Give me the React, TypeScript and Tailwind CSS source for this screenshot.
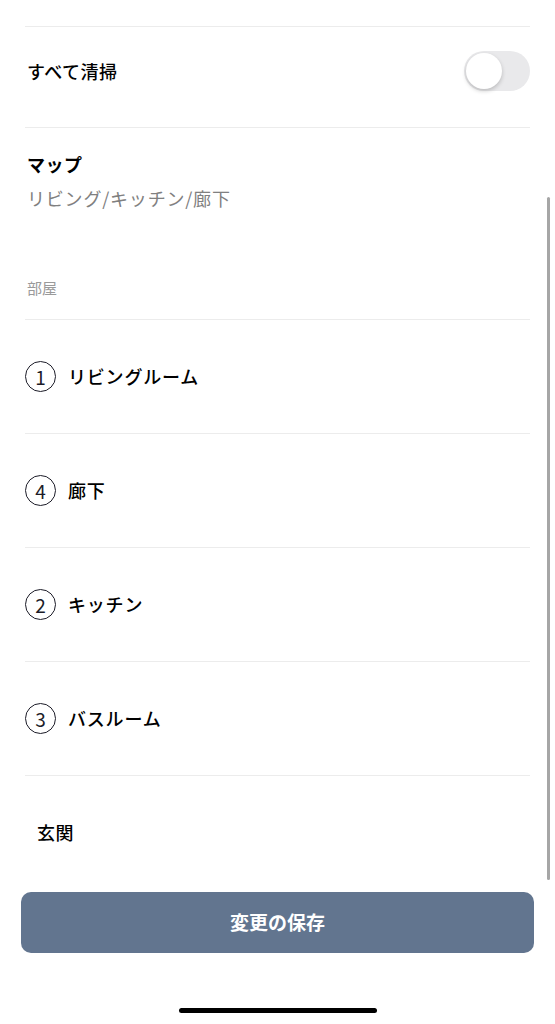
import React, { useState } from 'react';

const ROOMS = [
  { num: 1, name: 'リビングルーム' },
  { num: 4, name: '廊下' },
  { num: 2, name: 'キッチン' },
  { num: 3, name: 'バスルーム' },
];

const FONT = { fontFamily: '"Noto Sans CJK JP", "Noto Sans", sans-serif' };

// Numbered circle used before each room name.
const RoomBadge: React.FC<{ num: number }> = ({ num }) => (
  <span className="flex h-[31px] w-[31px] shrink-0 items-center justify-center rounded-full border-[1.5px] border-[#1c1c28] pb-[1px] text-[19px] leading-none text-[#1c1c28]">
    {num}
  </span>
);

const App: React.FC = () => {
  const [cleanAll, setCleanAll] = useState(false);

  return (
    <div className="relative h-[1024px] w-[555px] overflow-hidden bg-white text-black" style={FONT}>
      <div className="px-[25px] pt-[26px]">
        <div className="flex h-[102px] items-center justify-between border-y border-[#ececec] pb-[12px]">
          <span className="pl-[2px] text-[18px] font-medium tracking-[0.5px]">すべて清掃</span>
          <button
            aria-pressed={cleanAll}
            onClick={() => setCleanAll(v => !v)}
            className={`flex h-[40px] w-[66px] items-center rounded-full p-[2px] transition-colors ${cleanAll ? 'justify-end bg-[#62758f]' : 'justify-start bg-[#e9e9eb]'}`}
          >
            <span className="h-[36px] w-[36px] rounded-full bg-white shadow-[0_2px_4px_rgba(0,0,0,0.2)]" />
          </button>
        </div>

        <div className="h-[192px] border-b border-[#ececec] pl-[2px]">
          <p className="pt-[23px] text-[18px] font-bold leading-[26px] tracking-[0.5px]">マップ</p>
          <p className="mt-[8px] text-[18px] leading-[26px] tracking-[0.8px] text-[#808080]">リビング/キッチン/廊下</p>
          <p className="mt-[66px] text-[15px] leading-[22px] text-[#9a9a9a]">部屋</p>
        </div>

        {ROOMS.map(room => (
          <div key={room.num} className="flex h-[114px] items-center gap-[12px] border-b border-[#ececec]">
            <RoomBadge num={room.num} />
            <span className="text-[18px] font-medium tracking-[0.8px]">{room.name}</span>
          </div>
        ))}

        <div className="flex h-[112px] items-center pl-[12px]">
          <span className="text-[18px] font-medium tracking-[0.5px]">玄関</span>
        </div>
      </div>

      <div className="px-[21px] pt-[4px]">
        <button className="flex h-[61px] w-full items-center justify-center rounded-[10px] bg-[#62758f] text-[19px] font-bold text-white">
          変更の保存
        </button>
      </div>

      <div className="flex justify-center pt-[55px]">
        <span className="h-[5px] w-[198px] rounded-full bg-black" />
      </div>

      {/* scroll indicator */}
      <span className="absolute right-[5px] top-[197px] h-[683px] w-[3px] rounded-full bg-[#a6a6a6]" />
    </div>
  );
};

export default App;
